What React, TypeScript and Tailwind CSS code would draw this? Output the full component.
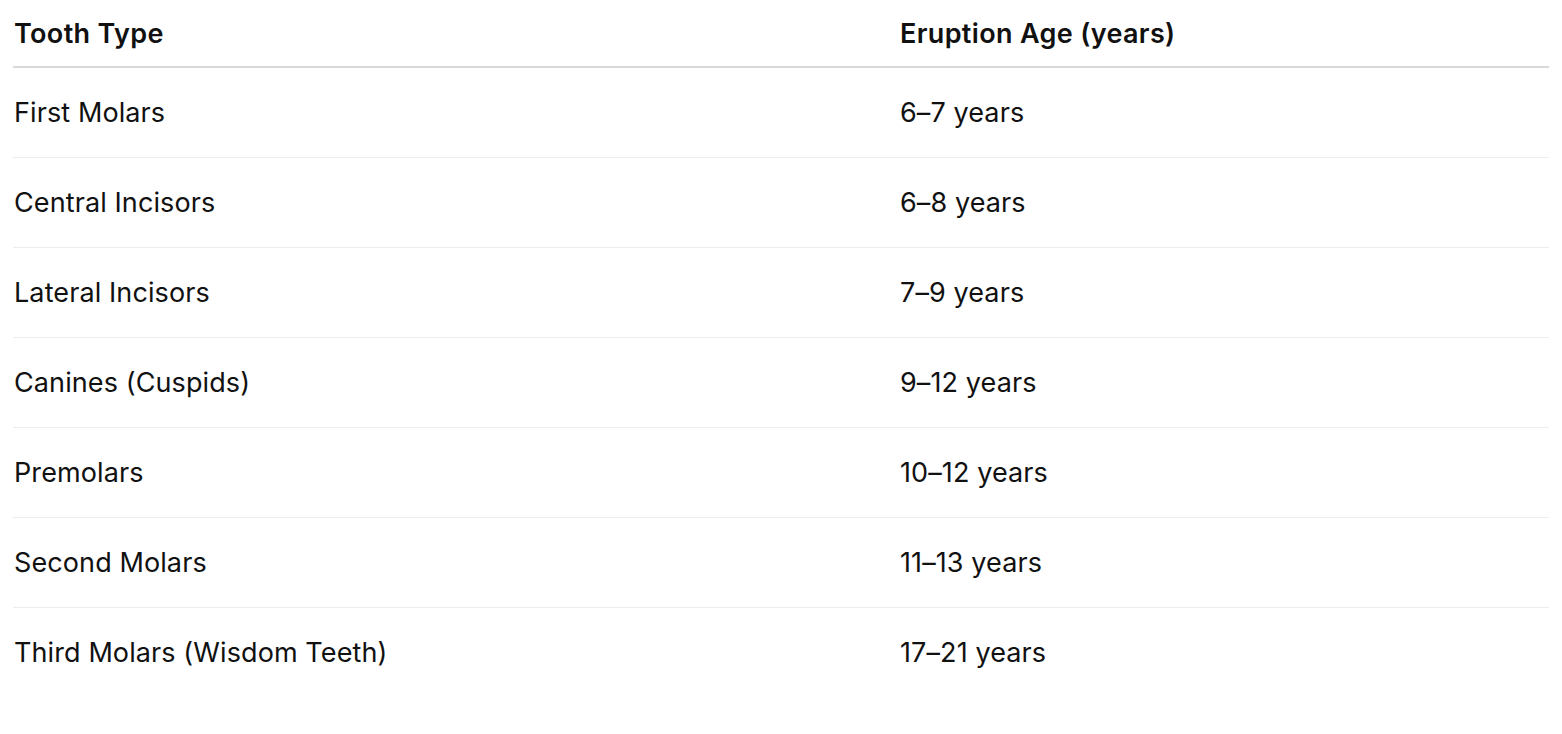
const rows = [
  ["First Molars", "6–7 years"],
  ["Central Incisors", "6–8 years"],
  ["Lateral Incisors", "7–9 years"],
  ["Canines (Cuspids)", "9–12 years"],
  ["Premolars", "10–12 years"],
  ["Second Molars", "11–13 years"],
  ["Third Molars (Wisdom Teeth)", "17–21 years"],
];

const App = () => {
  return (
    <div className="min-h-screen bg-white px-[13px] text-[#111111] font-['Inter',sans-serif]">
      <table className="w-full border-collapse text-left">
        <thead>
          <tr className="border-b-2 border-[#d9d9d9]">
            <th className="h-[67px] w-[887px] p-0 pt-[3px] pl-px text-[27px] tracking-[0.35px] font-semibold align-middle">Tooth Type</th>
            <th className="h-[67px] p-0 pt-[3px] text-[27px] tracking-[0.35px] font-semibold align-middle">Eruption Age (years)</th>
          </tr>
        </thead>
        <tbody>
          {rows.map(([tooth, age], i) => (
            <tr key={tooth} className={i < rows.length - 1 ? "border-b border-[#ededed]" : ""}>
              <td className="h-[90px] p-0 pt-[2px] pl-px text-[27px] tracking-[0.1px] align-middle">{tooth}</td>
              <td className="h-[90px] p-0 pt-[2px] text-[27px] tracking-[0.1px] align-middle">{age}</td>
            </tr>
          ))}
        </tbody>
      </table>
    </div>
  );
};

export default App;
